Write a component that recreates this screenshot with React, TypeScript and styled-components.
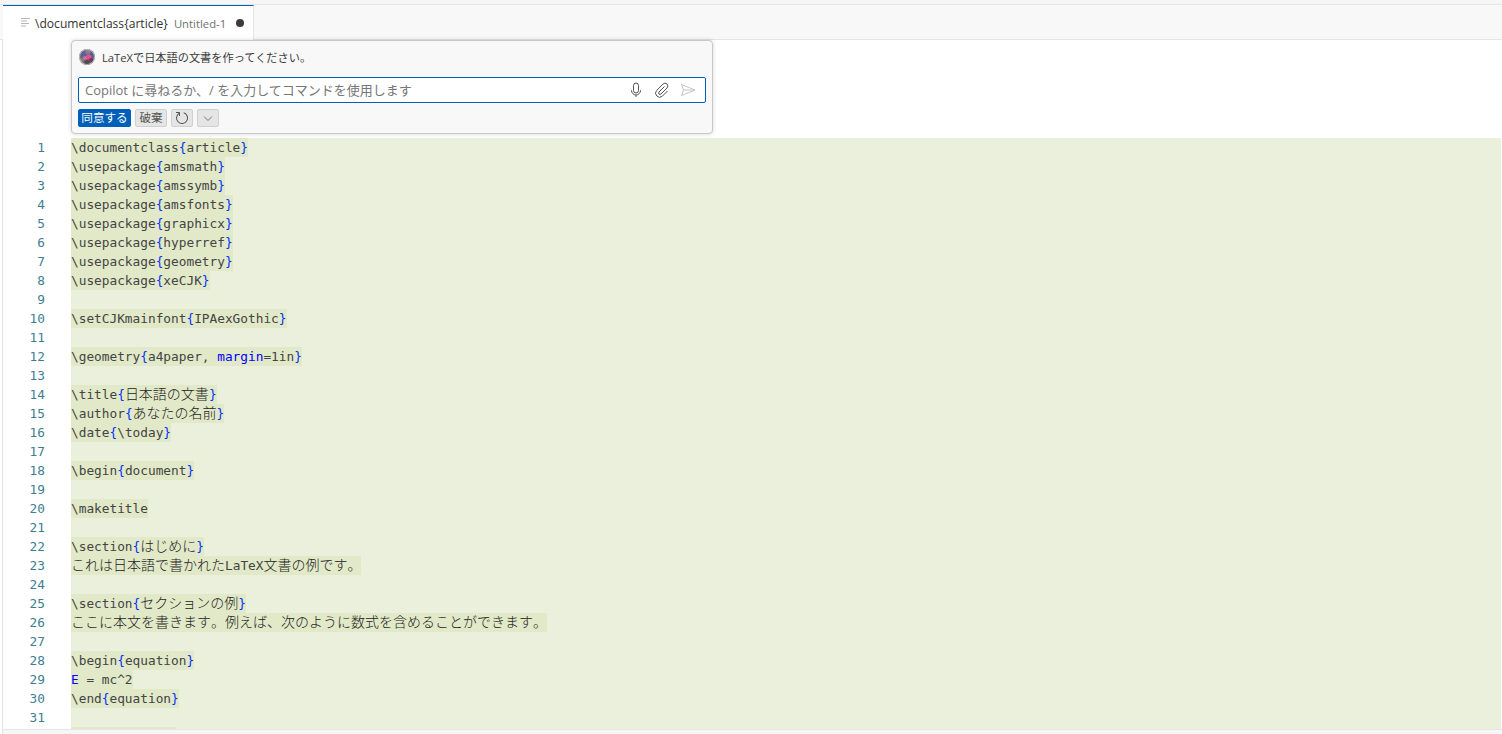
import styled, { createGlobalStyle } from "styled-components";

const UI_FONT = `"Open Sans", "Noto Sans CJK JP", sans-serif`;
const CODE_FONT = `"DejaVu Sans Mono", "Noto Sans CJK JP", monospace`;

// ========================================================================================= //
// [ STYLED COMPONENTS ] =================================================================== //
// ========================================================================================= //

const Global = createGlobalStyle`
  html, body {
    margin: 0;
    height: 100%;
    overflow: hidden;
    background: #fff;
  }
`;

const Shell = styled.div`
  height: 734px;
  display: flex;
  flex-direction: column;
  overflow: hidden;
  background: #fff;
`;

const TopStrip = styled.div`
  height: 4px;
  flex: none;
  background: #f6f6f6;
  border-bottom: 1px solid #e5e5e5;
`;

const TabBar = styled.div`
  height: 34px;
  flex: none;
  display: flex;
  padding-left: 3px;
  background: #f8f8f8;
  border-bottom: 1px solid #e5e5e5;
`;

const Tab = styled.div`
  width: 251px;
  height: 35px;
  box-sizing: border-box;
  display: flex;
  align-items: center;
  padding-left: 17px;
  background: #fff;
  border-top: 1px solid #005fb8;
  border-right: 1px solid #e5e5e5;
  font-family: ${UI_FONT};
`;

const TabName = styled.span`
  margin-left: 3px;
  font-size: 12.1px;
  color: #333;
  white-space: nowrap;
`;

const TabHint = styled.span`
  margin-left: 6px;
  font-size: 11.3px;
  color: #6f6f6f;
  white-space: nowrap;
`;

const Dirty = styled.span`
  width: 8px;
  height: 8px;
  margin-left: 10px;
  border-radius: 50%;
  background: #3b3b3b;
`;

const Body = styled.div`
  flex: 1;
  min-height: 0;
  display: flex;
  flex-direction: column;
  margin-left: 2px;
  border-left: 1px solid #e5e5e5;
`;

const WidgetZone = styled.div`
  height: 98px;
  flex: none;
  padding-left: 68px;
  box-sizing: border-box;
`;

const Widget = styled.div`
  width: 642px;
  height: 94px;
  box-sizing: border-box;
  padding: 7px 6px 0;
  background: #f8f8f8;
  border: 1px solid #c8c8c8;
  border-radius: 4px;
  box-shadow: 0 0 4px rgba(0, 0, 0, 0.16);
  font-family: ${UI_FONT};
`;

const Prompt = styled.div`
  display: flex;
  align-items: center;
  height: 18px;
  gap: 7px;
  padding-left: 1px;
  font-size: 11.2px;
  color: #3b3b3b;
`;

const InputBox = styled.div`
  height: 26px;
  box-sizing: border-box;
  margin-top: 11px;
  display: flex;
  align-items: center;
  padding: 0 9px 0 6px;
  background: #fff;
  border: 1px solid #005fb8;
  border-radius: 2px;
`;

const Placeholder = styled.span`
  flex: 1;
  margin-top: -1px;
  font-size: 13px;
  color: #767676;
  white-space: nowrap;
`;

const InputIcons = styled.div`
  display: flex;
  align-items: center;
  gap: 10px;
`;

const Actions = styled.div`
  display: flex;
  gap: 4px;
  margin-top: 6px;
`;

const ActionButton = styled.button<{ $primary?: boolean; $width: number }>`
  width: ${(p) => p.$width}px;
  height: 18px;
  box-sizing: border-box;
  padding: 0;
  display: flex;
  align-items: center;
  justify-content: center;
  font-family: ${UI_FONT};
  font-size: 11.6px;
  line-height: 16px;
  border-radius: 2px;
  color: ${(p) => (p.$primary ? "#fff" : "#555")};
  background: ${(p) => (p.$primary ? "#005fb8" : "#e5e5e5")};
  border: 1px solid ${(p) => (p.$primary ? "#005fb8" : "#d0d0d0")};
`;

const Editor = styled.div`
  flex: 1;
  min-height: 0;
  overflow: hidden;
  font-family: ${CODE_FONT};
  font-size: 12.79px;
`;

const Row = styled.div`
  display: flex;
  height: 19px;
  line-height: 19px;
`;

const LineNo = styled.div`
  width: 42px;
  flex: none;
  text-align: right;
  color: #3d7e91;
`;

const Gutter = styled.div`
  width: 26px;
  flex: none;
`;

const Inserted = styled.div`
  flex: 1;
  margin-right: 1px;
  background: #ebf0dd;
  white-space: pre;
`;

const Run = styled.span<{ $width?: number }>`
  display: inline-block;
  height: 19px;
  vertical-align: top;
  ${(p) => (p.$width ? `width: ${p.$width}px;` : "")}
  background: #e1e9c8;
  color: #444;
`;

const Brace = styled.span`
  color: #0431fa;
`;

const Key = styled.span`
  color: #0000ff;
`;

const Jp = styled.span`
  font-size: 14px;
  line-height: 1;
  font-weight: 300;
  color: #222;
  font-family: "Noto Sans CJK JP", sans-serif;
  font-kerning: none;
  text-spacing-trim: space-all;
`;

const FootBar = styled.div`
  height: 4px;
  flex: none;
  background: #f6f6f6;
  border-top: 1px solid #e5e5e5;
`;

// ========================================================================================= //
// [ DATA ] ================================================================================ //
// ========================================================================================= //

const SOURCE = [
  "\\documentclass{article}",
  "\\usepackage{amsmath}",
  "\\usepackage{amssymb}",
  "\\usepackage{amsfonts}",
  "\\usepackage{graphicx}",
  "\\usepackage{hyperref}",
  "\\usepackage{geometry}",
  "\\usepackage{xeCJK}",
  "",
  "\\setCJKmainfont{IPAexGothic}",
  "",
  "\\geometry{a4paper, margin=1in}",
  "",
  "\\title{日本語の文書}",
  "\\author{あなたの名前}",
  "\\date{\\today}",
  "",
  "\\begin{document}",
  "",
  "\\maketitle",
  "",
  "\\section{はじめに}",
  "これは日本語で書かれたLaTeX文書の例です。",
  "",
  "\\section{セクションの例}",
  "ここに本文を書きます。例えば、次のように数式を含めることができます。",
  "",
  "\\begin{equation}",
  "E = mc^2",
  "\\end{equation}",
  "",
];

const renderToken = (token: string, key: number) => {
  if (token === "{" || token === "}") return <Brace key={key}>{token}</Brace>;
  if (token === "margin" || token === "E") return <Key key={key}>{token}</Key>;
  if (/^[\u3000-\u9fff]/.test(token)) return <Jp key={key}>{token}</Jp>;
  return token;
};

const renderLine = (text: string) =>
  text
    .split(/([{}]|margin|^E(?= )|[\u3000-\u9fff]+)/)
    .filter(Boolean)
    .map(renderToken);

// ========================================================================================= //
// [ ICONS ] =============================================================================== //
// ========================================================================================= //

const Avatar = () => (
  <svg width="16" height="16" viewBox="0 0 16 16">
    <defs>
      <clipPath id="avatar-clip">
        <circle cx="8" cy="8" r="8" />
      </clipPath>
    </defs>
    <g clipPath="url(#avatar-clip)">
      <rect width="16" height="16" fill="#6b6478" />
      <circle cx="4" cy="5" r="2.5" fill="#5b5fa0" />
      <circle cx="9" cy="3" r="2.5" fill="#8d7a96" />
      <circle cx="13" cy="6" r="2.5" fill="#4c5f8c" />
      <circle cx="10" cy="8" r="2.6" fill="#e0508c" />
      <circle cx="6" cy="9" r="2" fill="#d46aa0" />
      <circle cx="12" cy="11" r="2" fill="#7c2f4e" />
      <circle cx="3" cy="11" r="2" fill="#8a8478" />
      <circle cx="8" cy="13.5" r="2.5" fill="#4b4a4c" />
    </g>
    <circle cx="8" cy="8" r="7.5" fill="none" stroke="#d8d8d8" strokeWidth="1" opacity="0.7" />
  </svg>
);

const FileLines = () => (
  <svg width="12" height="12" viewBox="0 0 12 12" fill="none" stroke="#b5b5b5">
    <path d="M1 1.5h9M1 4h6M1 6.5h8M1 9h5" />
  </svg>
);

const Mic = () => (
  <svg width="16" height="16" viewBox="0 0 16 16" fill="none" stroke="#555" strokeWidth="1">
    <rect x="5.5" y="1" width="5" height="10" rx="2.5" />
    <path d="M3.5 8v.5a4.5 4.5 0 0 0 9 0V8M8 13v2" />
  </svg>
);

const Clip = () => (
  <svg width="16" height="16" viewBox="0 0 16 16" fill="none" stroke="#555" strokeWidth="1">
    <path d="M10.5 4.5 5 10a1.4 1.4 0 0 0 2 2l6-6a2.8 2.8 0 0 0-4-4L2.8 8.3a4 4 0 0 0 5.7 5.7l5-5" />
  </svg>
);

const Send = () => (
  <svg width="16" height="16" viewBox="0 0 16 16" fill="none" stroke="#c4c4c4" strokeWidth="1">
    <path d="M1.5 2.5 15 8 1.5 13.5 3.5 8ZM3.5 8H15" />
  </svg>
);

const Refresh = () => (
  <svg width="16" height="16" viewBox="0 0 16 16" fill="#555">
    <path d="M4.681 3H2V2h3.5l.5.5V6H5V4a5 5 0 1 0 4.53-.761l.302-.954A6 6 0 1 1 4.681 3z" />
  </svg>
);

const Chevron = () => (
  <svg width="16" height="16" viewBox="0 0 16 16" fill="none" stroke="#777" strokeWidth="1">
    <path d="m4 6.5 4 4 4-4" />
  </svg>
);

// ========================================================================================= //
// [ EXPORTED COMPONENT ] ================================================================== //
// ========================================================================================= //

export default function App() {
  return (
    <Shell>
      <Global />
      <TopStrip />
      <TabBar>
        <Tab>
          <FileLines />
          <TabName>\documentclass{"{article}"}</TabName>
          <TabHint>Untitled-1</TabHint>
          <Dirty />
        </Tab>
      </TabBar>
      <Body>
        <WidgetZone>
          <Widget>
            <Prompt>
              <Avatar />
              LaTeXで日本語の文書を作ってください。
            </Prompt>
            <InputBox>
              <Placeholder>Copilot に尋ねるか、/ を入力してコマンドを使用します</Placeholder>
              <InputIcons>
                <Mic />
                <Clip />
                <Send />
              </InputIcons>
            </InputBox>
            <Actions>
              <ActionButton $primary $width={53}>同意する</ActionButton>
              <ActionButton $width={32}>破棄</ActionButton>
              <ActionButton $width={22}><Refresh /></ActionButton>
              <ActionButton $width={22}><Chevron /></ActionButton>
            </Actions>
          </Widget>
        </WidgetZone>
        <Editor>
          {SOURCE.map((text, i) => (
            <Row key={i}>
              <LineNo>{i + 1}</LineNo>
              <Gutter />
              <Inserted>{text && <Run>{renderLine(text)}</Run>}</Inserted>
            </Row>
          ))}
          <Row>
            <LineNo />
            <Gutter />
            <Inserted><Run $width={105} /></Inserted>
          </Row>
        </Editor>
        <FootBar />
      </Body>
    </Shell>
  );
}
